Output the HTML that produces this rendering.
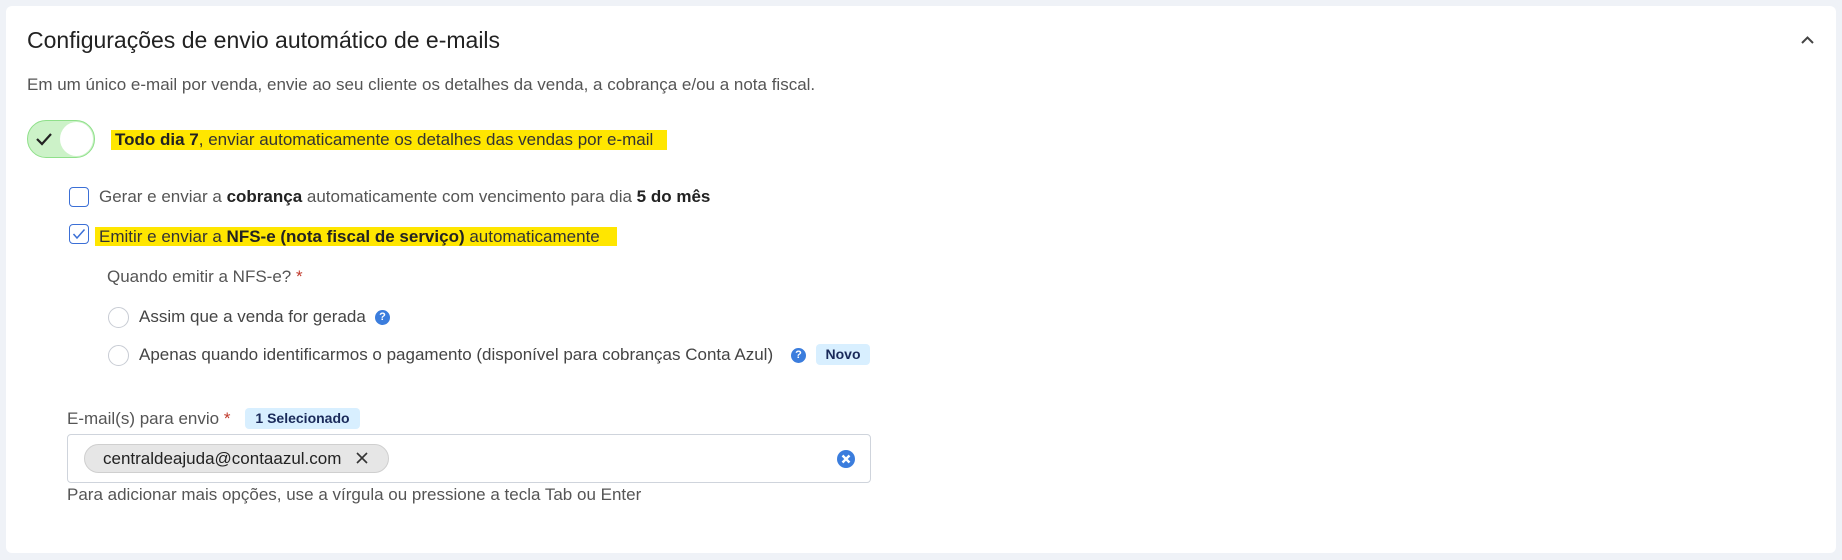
<!DOCTYPE html>
<html><head><meta charset="utf-8"><style>
*{box-sizing:border-box;margin:0;padding:0}
body{width:1842px;height:560px;background:#eff2f7;font-family:"Liberation Sans",sans-serif;color:#444;position:relative;overflow:hidden}
.card{position:absolute;left:6px;top:6px;width:1830px;height:547px;background:#fff;border-radius:6px}
.a{position:absolute;white-space:nowrap}
.t16{font-size:17px}
b{font-weight:700;color:#222}
.hl{background:#ffe600;color:#333}
.cb{position:absolute;width:20px;height:20px;border:1.5px solid #3b6fd6;border-radius:4px;background:#fff}
.rd{position:absolute;width:21px;height:21px;border:1px solid #c8ccd4;border-radius:50%;background:#fff}
.q{position:absolute;width:15px;height:15px;border-radius:50%;background:#3b7ddd;color:#fff;font-size:11px;font-weight:700;text-align:center;line-height:15px}
</style></head><body>
<div class="card"></div>
<div class="a" style="left:27px;top:27px;font-size:23px;color:#222">Configurações de envio automático de e-mails</div>
<svg class="a" style="left:1800px;top:35px" width="15" height="10" viewBox="0 0 15 10"><path d="M2 8 L7.5 2.5 L13 8" stroke="#444" stroke-width="2" fill="none"/></svg>
<div class="a t16" style="left:27px;top:75px;color:#555">Em um único e-mail por venda, envie ao seu cliente os detalhes da venda, a cobrança e/ou a nota fiscal.</div>
<div class="a" style="left:27px;top:120px;width:68px;height:38px;border-radius:19px;background:#ccf2c8;border:1.5px solid #8fe08a"></div>
<div class="a" style="left:60px;top:122px;width:33px;height:34px;border-radius:50%;background:#fff"></div>
<svg class="a" style="left:35px;top:131px" width="18" height="16" viewBox="0 0 18 16"><path d="M2 8 L7 13 L16 3" stroke="#222" stroke-width="2.2" fill="none"/></svg>
<div class="a t16 hl" style="left:111px;top:130px;height:20px;line-height:20px;padding:0 4px;width:556px"><b>Todo dia 7</b>, enviar automaticamente os detalhes das vendas por e-mail</div>
<div class="cb" style="left:69px;top:187px"></div>
<div class="a t16" style="left:99px;top:187px;line-height:20px;color:#555">Gerar e enviar a <b>cobrança</b> automaticamente com vencimento para dia <b>5 do mês</b></div>
<div class="cb" style="left:69px;top:224px"></div>
<svg class="a" style="left:72px;top:228px" width="14" height="12" viewBox="0 0 14 12"><path d="M1.5 6 L5 10 L12.5 1.5" stroke="#3b6fd6" stroke-width="1.5" fill="none"/></svg>
<div class="a t16 hl" style="left:95px;top:227px;height:19px;line-height:19px;padding-left:4px;width:522px">Emitir e enviar a <b>NFS-e (nota fiscal de serviço)</b> automaticamente</div>
<div class="a t16" style="left:107px;top:267px;color:#555">Quando emitir a NFS-e? <span style="color:#c0392b">*</span></div>
<div class="rd" style="left:108px;top:307px"></div>
<div class="a t16" style="left:139px;top:307px;color:#444">Assim que a venda for gerada</div>
<div class="q" style="left:375px;top:310px">?</div>
<div class="rd" style="left:108px;top:345px"></div>
<div class="a t16" style="left:139px;top:345px;color:#444">Apenas quando identificarmos o pagamento (disponível para cobranças Conta Azul)</div>
<div class="q" style="left:791px;top:348px">?</div>
<div class="a" style="left:816px;top:344px;width:54px;height:21px;background:#d8efff;border-radius:4px;font-size:14px;font-weight:700;color:#1a2a5a;text-align:center;line-height:21px">Novo</div>
<div class="a t16" style="left:67px;top:409px;color:#555">E-mail(s) para envio <span style="color:#c0392b">*</span></div>
<div class="a" style="left:245px;top:408px;width:115px;height:21px;background:#d8efff;border-radius:4px;font-size:14px;font-weight:700;color:#1a2a5a;text-align:center;line-height:21px">1 Selecionado</div>
<div class="a" style="left:67px;top:434px;width:804px;height:49px;border:1px solid #cfd4dc;border-radius:4px"></div>
<div class="a t16" style="left:84px;top:444px;width:305px;height:29px;border-radius:15px;background:#e6e6e6;border:1px solid #cfcfcf;line-height:27px;padding-left:18px;color:#222">centraldeajuda@contaazul.com</div>
<svg class="a" style="left:356px;top:452px" width="12" height="12" viewBox="0 0 12 12"><path d="M1 1 L11 11 M11 1 L1 11" stroke="#333" stroke-width="1.6"/></svg>
<svg class="a" style="left:837px;top:450px" width="18" height="18" viewBox="0 0 18 18"><circle cx="9" cy="9" r="9" fill="#3b7ddd"/><path d="M5.5 5.5 L12.5 12.5 M12.5 5.5 L5.5 12.5" stroke="#fff" stroke-width="2.4"/></svg>
<div class="a t16" style="left:67px;top:485px;color:#555">Para adicionar mais opções, use a vírgula ou pressione a tecla Tab ou Enter</div>
</body></html>
